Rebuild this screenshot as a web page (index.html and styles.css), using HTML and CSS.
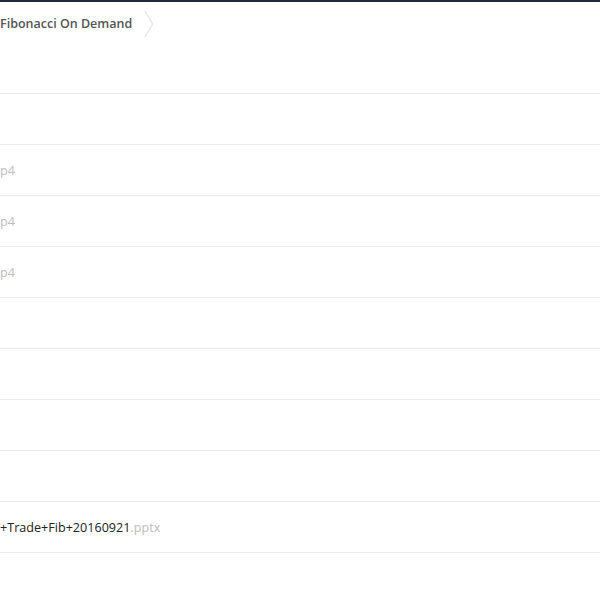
FILE: index.html
```html
<!DOCTYPE html>
<html lang="en">
<head>
    <meta charset="UTF-8">
    <meta name="viewport" content="width=device-width, initial-scale=1.0">
    <title>Fibonacci On Demand</title>
    <link rel="stylesheet" href="styles.css">
</head>
<body>

<div class="topbar"></div>

<div class="breadcrumb">
    <span class="crumb">Fibonacci On Demand</span>
    <svg class="chevron" width="10" height="28" viewBox="0 0 10 28">
        <path d="M1 1 L8.5 14 L1 27" fill="none" stroke="#e2e2e2" stroke-width="1.2"/>
    </svg>
</div>

<div class="files">
    <div class="row head"></div>
    <div class="row"></div>
    <div class="row"><span class="ext">p4</span></div>
    <div class="row"><span class="ext">p4</span></div>
    <div class="row"><span class="ext">p4</span></div>
    <div class="row"></div>
    <div class="row"></div>
    <div class="row"></div>
    <div class="row"></div>
    <div class="row"><span class="name">+Trade+Fib+20160921</span><span class="ext">.pptx</span></div>
    <div class="row"></div>
</div>

</body>
</html>
```

FILE: styles.css
```css
body {
    font-family: 'Open Sans', 'Liberation Sans', sans-serif;
    background-color: #ffffff;
    margin: 0;
    padding: 0;
    overflow: hidden;
}
.topbar {
    height: 2px;
    background-color: #1c2b3d;
}
.breadcrumb {
    display: flex;
    align-items: center;
    height: 42px;
}
.crumb {
    font-size: 12.5px;
    font-weight: 600;
    color: #555555;
}
.chevron {
    margin-left: 12px;
    margin-top: 1px;
}
.files {
    display: flex;
    flex-direction: column;
}
.row {
    height: 50px;
    border-bottom: 1px solid #ececec;
    display: flex;
    align-items: center;
    font-size: 12.6px;
    color: #222222;
}
.row.head {
    height: 49px;
}
.ext {
    color: #bdbdbd;
}
```
